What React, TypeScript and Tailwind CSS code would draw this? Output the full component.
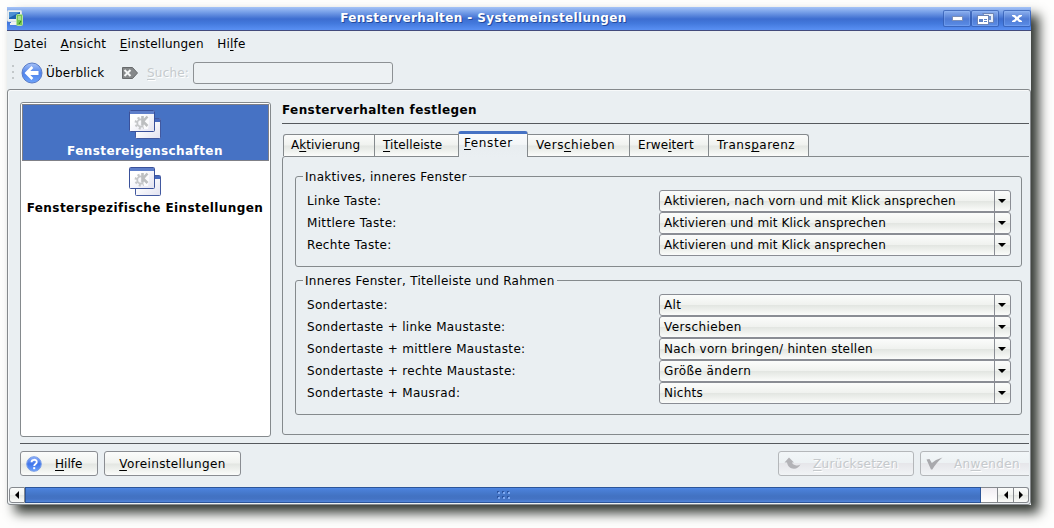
import type { ReactNode } from "react";

function Label({ text }: { text: string }) {
  const i = text.indexOf("&");
  if (i < 0) return <span>{text}</span>;
  return (
    <span>
      {text.slice(0, i)}
      <span className="underline decoration-1 underline-offset-2">{text[i + 1]}</span>
      {text.slice(i + 2)}
    </span>
  );
}

function AppIcon() {
  return (
    <svg width="18" height="18" viewBox="0 0 18 18">
      <path d="M4 11h7v2h1v2H3v-2h1z" fill="#eef1f3" />
      <rect x="0.5" y="0.5" width="14" height="11" rx="1" fill="#e8eef0" stroke="#d5dfe8" />
      <rect x="2" y="2" width="11" height="7" fill="#1d62b0" />
      <path d="M2 2h11L2 8z" fill="#4d91d4" />
      <rect x="9.5" y="4.5" width="6" height="11" rx="1" fill="#74c655" stroke="#b4e49a" />
      <path d="M11 7h3M11 9h3" stroke="#d9f5c8" />
      <path d="M12 14l2-3" stroke="#2c7d16" />
    </svg>
  );
}

function BackIcon() {
  return (
    <svg width="22" height="22" viewBox="0 0 22 22">
      <defs>
        <linearGradient id="back" x1="0" y1="0" x2="0" y2="1">
          <stop offset="0" stopColor="#a9c3f7" />
          <stop offset="0.5" stopColor="#4e82ea" />
          <stop offset="1" stopColor="#6ea4fb" />
        </linearGradient>
      </defs>
      <circle cx="11" cy="11" r="10" fill="url(#back)" stroke="#5a7cc8" />
      <path d="M10.5 4L3.500 11l7 7 1.800-2-3-3H17.500V9H9.300l3-3z" fill="#fff" />
    </svg>
  );
}

function ClearIcon() {
  return (
    <svg width="16" height="12" viewBox="0 0 16 12">
      <path d="M0.500 0.500h10L15.500 6l-5 5.500h-10z" fill="#85888a" stroke="#66696b" />
      <path d="M2.500 3l6 6M8.500 3L2.500 9" stroke="#f4f6f6" strokeWidth="2" />
    </svg>
  );
}

function WindowsIcon({ id }: { id: string }) {
  return (
    <svg width="32" height="30" viewBox="0 0 32 30">
      <defs>
        <linearGradient id={id} x1="0" y1="0" x2="1" y2="1">
          <stop offset="0.300" stopColor="#ffffff" />
          <stop offset="1" stopColor="#e2e2f0" />
        </linearGradient>
      </defs>
      <rect x="6.500" y="8.500" width="25" height="20" rx="1" fill={`url(#${id})`} stroke="#4259a0" />
      <rect x="7" y="9" width="24" height="3" fill="#4668bd" />
      <rect x="0.500" y="0.500" width="25" height="21" rx="1" fill={`url(#${id})`} stroke="#3a519a" />
      <rect x="1" y="1" width="24" height="3" fill="#5f7fca" />
      <circle cx="12" cy="13" r="5.200" fill="none" stroke="#c5c7c9" strokeWidth="2.500" strokeDasharray="2 2.084" />
      <circle cx="12" cy="13" r="3.700" fill="none" stroke="#c5c7c9" strokeWidth="1.800" />
      <path d="M12 6h8v7l-1 6h-4z" fill="#fbfbfd" />
      <path d="M13.500 6v9.500M18.500 6.500L14 11.500l4.500 4.500" fill="none" stroke="#bcbec0" strokeWidth="2.600" />
    </svg>
  );
}

function HelpIcon() {
  return (
    <svg width="16" height="16" viewBox="0 0 16 16">
      <defs>
        <linearGradient id="help" x1="0" y1="0" x2="0" y2="1">
          <stop offset="0" stopColor="#8fb2fb" />
          <stop offset="0.500" stopColor="#3f74ea" />
          <stop offset="1" stopColor="#6ca2ff" />
        </linearGradient>
      </defs>
      <circle cx="8" cy="8" r="7.300" fill="url(#help)" stroke="#7a9ee6" />
      <path d="M5.500 6.200C5.500 3 10.800 3 10.800 6c0 2-2.600 2-2.600 4" fill="none" stroke="#fff" strokeWidth="1.800" />
      <rect x="7.200" y="11.200" width="2" height="2" fill="#fff" />
    </svg>
  );
}

function UndoIcon() {
  return (
    <svg width="17" height="13" viewBox="0 0 17 13">
      <path d="M5 0.500L0.500 5.500H3c1 4 3 6.200 7 6.200 3 0 5-1.500 6.500-4.200-2 1-3.500 1.200-5 .7C9.500 7.600 8.500 7 8 5.500h2z" fill="#b3b3b7" />
    </svg>
  );
}

function CheckIcon() {
  return (
    <svg width="17" height="13" viewBox="0 0 17 13">
      <path d="M0.500 2.500L3.500 2l2.300 4L10 3l6.500-2.500C12 4 9 8 6.300 12.500H5z" fill="#a9a9ad" />
    </svg>
  );
}

function CaptionButton({ children }: { children: ReactNode }) {
  return (
    <div className="flex h-[17px] w-7 items-center justify-center rounded-[2px] border border-[#2b55ac]/70 bg-white/10 shadow-[inset_0_0_0_1px_rgba(150,190,255,0.300)]">
      {children}
    </div>
  );
}

const BUTTON_FACE =
  "bg-[linear-gradient(to_bottom,#fbfcfb_0%,#f0f2ef_48%,#e3e6e2_52%,#f3f5f2_85%,#fbfcfb_100%)]";

const DISABLED_FACE =
  "border-[#b4b7ba] bg-[linear-gradient(to_bottom,#f2f6f8_0%,#edf2f4_46%,#e6e6ea_50%,#f1f4f6_100%)] text-[#c5c9cc] [text-shadow:1px_1px_0_#fff]";

function Combo({ value, tracking }: { value: string; tracking: string }) {
  return (
    <div className={`flex h-[22px] w-[352px] rounded-[3px] border border-[#8a8d94] ${BUTTON_FACE}`}>
      <div className={`flex flex-1 items-center pb-px pl-1 ${tracking}`}>
        <Label text={value} />
      </div>
      <div className="flex w-4 items-center justify-center border-l border-[#8a8d94] pr-px">
        <svg width="8" height="4" viewBox="0 0 8 4">
          <path d="M0 0h8L4 4z" fill="#000" />
        </svg>
      </div>
    </div>
  );
}

type Row = { name: string; value: string; tracking?: string };

function Group({ title, rows, box }: { title: string; rows: Row[]; box: string }) {
  return (
    <fieldset className={`relative w-[727px] rounded-[3px] border border-[#858a8d] ${box}`}>
      <div className="absolute -top-2 left-[7px] flex h-4 items-center bg-[#eaeff2] px-[2px] tracking-[0.28px]">
        <Label text={title} />
      </div>
      <div className="flex flex-col pt-[13px] pl-[11px]">
        {rows.map((row) => (
          <div key={row.name} className="flex h-[22px] items-center">
            <div className="w-[352px] pb-px">
              <Label text={row.name} />
            </div>
            <Combo value={row.value} tracking={row.tracking ?? "tracking-[0.4px]"} />
          </div>
        ))}
      </div>
    </fieldset>
  );
}

const TABS = [
  { text: "A&ktivierung", size: "w-[92px] pl-[7px] tracking-[0.02px]" },
  { text: "&Titelleiste", size: "w-[83px] pl-2 tracking-[0.1px]" },
  { text: "&Fenster", size: "w-[70px] pl-[5px] tracking-[0.6px]" },
  { text: "Vers&chieben", size: "w-[102px] pl-2 tracking-[0.52px]" },
  { text: "Erwe&itert", size: "w-[79px] pl-2 tracking-[0.1px]" },
  { text: "Trans&parenz", size: "w-[100px] pl-2 tracking-[0.5px]" },
];

function Tabs() {
  return (
    <div className="flex h-[25px] items-end">
      {TABS.map((tab, i) =>
        i === 2 ? (
          <div
            key={tab.text}
            className={`relative z-10 -mb-px flex h-[26px] items-center rounded-t-[3px] border border-t-[3px] border-b-0 border-[#858a8d] border-t-[#4672c4] bg-[linear-gradient(to_bottom,#f9fbfc_0%,#f3f6f8_45%,#e8edf0_50%,#eaeff2_100%)] pb-[5px] ${tab.size}`}
          >
            <Label text={tab.text} />
          </div>
        ) : (
          <div
            key={tab.text}
            className={`flex h-[22px] items-center border-t border-r border-[#858a8d] pb-px ${BUTTON_FACE} ${tab.size} ${
              i === 0 ? "rounded-tl-[3px] border-l" : i === 5 ? "rounded-tr-[3px]" : i === 1 ? "border-r-0" : ""
            }`}
          >
            <Label text={tab.text} />
          </div>
        )
      )}
    </div>
  );
}

function ScrollArrow({ right, box }: { right?: boolean; box: string }) {
  return (
    <div className={`flex h-4 shrink-0 items-center justify-center border border-[#85898e] ${BUTTON_FACE} ${box}`}>
      <svg width="4" height="8" viewBox="0 0 4 8">
        <path d={right ? "M0 0v8l4-4z" : "M4 0v8L0 4z"} fill="#000" />
      </svg>
    </div>
  );
}

const GRIP = [0, 5, 10];

export default function App() {
  return (
    <div className="h-[528px] w-[1054px] overflow-hidden bg-[#fefefd] pt-[7px] pl-[7px] font-['DejaVu_Sans',sans-serif] text-[12px] leading-4 tracking-[0.33px] whitespace-nowrap text-black">
      <div className="flex h-[498px] w-[1024px] flex-col bg-[#eaeff2] shadow-[8px_8px_11px_0px_#343934]">
        <header className="flex h-6 shrink-0 items-center border-b border-[#424a7c] bg-[linear-gradient(to_bottom,#a5c3f6_0%,#7ba3ea_20%,#3d6dd0_52%,#4278dc_70%,#5990f3_100%)]">
          <div className="w-[18px] pt-px">
            <AppIcon />
          </div>
          <h1 className="flex-1 pb-[2px] text-center font-bold tracking-[0.38px] text-white [text-shadow:1px_1px_0_#234a9c]">
            <span className="pr-px">Fensterverhalten - Systemeinstellungen</span>
          </h1>
          <div className="flex">
            <CaptionButton>
              <svg width="11" height="5" viewBox="0 0 11 5">
                <rect x="0.500" y="0.500" width="10" height="4" fill="#fff" stroke="#7b8fb8" />
              </svg>
            </CaptionButton>
            <div className="mr-1">
              <CaptionButton>
                <svg width="17" height="12" viewBox="0 0 17 12">
                  <path d="M5.500 0.500h11v9h-5" fill="#6c8fce" stroke="#6d84b4" />
                  <path d="M7 2h8v6h-4" fill="none" stroke="#e6edf8" strokeWidth="2" />
                  <rect x="0.500" y="2.500" width="11" height="9" fill="#fff" stroke="#6d84b4" />
                  <path d="M2 6h4v3H2z" fill="#5d82c6" />
                  <path d="M7 6h3v1H7zM7 8h3v1H7z" fill="#5d82c6" />
                </svg>
              </CaptionButton>
            </div>
            <CaptionButton>
              <svg width="10" height="7" viewBox="0 0 10 7">
                <path d="M0 0h3l2 2 2-2h3v1L7 3v1l3 2v1H7L5 5 3 7H0V6l3-2V3L0 1z" fill="#fff" />
              </svg>
            </CaptionButton>
          </div>
        </header>

        <nav className="flex h-[26px] shrink-0 items-center gap-[13.500px] pl-[7px] tracking-[0.2px]">
          <Label text="&Datei" />
          <Label text="&Ansicht" />
          <Label text="&Einstellungen" />
          <Label text="Hi&lfe" />
        </nav>

        <div className="flex h-8 shrink-0 items-center pl-[5px]">
          <div className="mr-[7px] h-4 w-[2px] bg-[repeating-linear-gradient(to_bottom,#c3c8ca_0_2px,transparent_2px_6px)]" />
          <BackIcon />
          <span className="ml-[3px] w-[76px] tracking-[0.2px]">Überblick</span>
          <ClearIcon />
          <span className="ml-[9px] w-[46px] tracking-[0.2px] text-[#c5cacd] [text-shadow:1px_1px_0_#fff]">
            <Label text="&Suche:" />
          </span>
          <input
            aria-label="Suche"
            disabled
            className="h-[22px] w-[200px] rounded-[3px] border border-[#8d9194] bg-[#edf1f3]"
          />
        </div>

        <main className="flex min-h-0 flex-1 flex-col rounded-[3px] border border-[#85898c] shadow-[inset_1px_1px_0_#f7f9fa]">
          <div className="flex h-[353px] pt-3 pl-3">
            <aside className="h-[335px] w-[251px] shrink-0 rounded-[3px] border border-[#858a8d] bg-white p-px text-center font-bold tracking-[0.42px]">
              <div className="flex h-[57px] flex-col items-center border border-[#7f8087] bg-[#4672c4] pt-[5px] pr-px text-white">
                <WindowsIcon id="w1" />
                <span className="mt-[3px]">Fenstereigenschaften</span>
              </div>
              <div className="flex flex-col items-center pt-[6px] pr-px">
                <WindowsIcon id="w2" />
                <span className="mt-[3px]">Fensterspezifische Einstellungen</span>
              </div>
            </aside>

            <section className="ml-[11px] flex w-[747px] flex-col overflow-hidden">
              <h2 className="h-[22px] border-b border-[#55595d] pb-[5px] font-bold tracking-[0.41px]">
                Fensterverhalten festlegen
              </h2>
              <div className="relative z-10 mt-[7px] pl-px">
                <Tabs />
              </div>
              <div className="flex h-[279px] w-[752px] flex-col rounded-[3px] border border-[#858a8d] pt-[19px] pl-3">
                <Group
                  title="Inaktives, inneres Fenster"
                  box="h-[91px] mb-[13px]"
                  rows={[
                    {
                      name: "Linke Taste:",
                      value: "Aktivieren, nach vorn und mit Klick ansprechen",
                      tracking: "tracking-[0.17px]",
                    },
                    {
                      name: "Mittlere Taste:",
                      value: "Aktivieren und mit Klick ansprechen",
                      tracking: "tracking-[0.15px]",
                    },
                    {
                      name: "Rechte Taste:",
                      value: "Aktivieren und mit Klick ansprechen",
                      tracking: "tracking-[0.15px]",
                    },
                  ]}
                />
                <Group
                  title="Inneres Fenster, Titelleiste und Rahmen"
                  box="h-[135px]"
                  rows={[
                    { name: "Sondertaste:", value: "Alt" },
                    { name: "Sondertaste + linke Maustaste:", value: "Verschieben" },
                    {
                      name: "Sondertaste + mittlere Maustaste:",
                      value: "Nach vorn bringen/ hinten stellen",
                      tracking: "tracking-[0.24px]",
                    },
                    { name: "Sondertaste + rechte Maustaste:", value: "Größe ändern" },
                    { name: "Sondertaste + Mausrad:", value: "Nichts", tracking: "tracking-[0.24px]" },
                  ]}
                />
              </div>
            </section>
          </div>

          <div className="mr-px ml-3 h-px shrink-0 bg-[#55595d]" />

          <footer className="mr-px flex h-[43px] shrink-0 overflow-hidden pt-[7px] pl-3">
            <button
              className={`flex h-[25px] w-[78px] shrink-0 items-center rounded-[3px] border border-[#8a8d92] pl-[5px] ${BUTTON_FACE}`}
            >
              <HelpIcon />
              <span className="ml-[13px] tracking-[0.02px]">
                <Label text="&Hilfe" />
              </span>
            </button>
            <button
              className={`ml-[6px] h-[25px] w-[137px] shrink-0 rounded-[3px] border border-[#8a8d92] tracking-[0.38px] ${BUTTON_FACE}`}
            >
              <Label text="&Voreinstellungen" />
            </button>
            <button
              disabled
              className={`ml-[537px] flex h-[25px] w-[136px] shrink-0 items-center rounded-[3px] border pl-[5px] ${DISABLED_FACE}`}
            >
              <UndoIcon />
              <span className="ml-3">
                <Label text="&Zurücksetzen" />
              </span>
            </button>
            <button
              disabled
              className={`ml-[6px] flex h-[25px] w-[120px] shrink-0 items-center rounded-[3px] border pl-[5px] ${DISABLED_FACE}`}
            >
              <CheckIcon />
              <span className="ml-[11px]">
                <Label text="An&wenden" />
              </span>
            </button>
          </footer>

          <div className="mr-px ml-px flex h-4 shrink-0">
            <ScrollArrow box="w-4 rounded-l-[3px]" />
            <div className="flex w-[956px] shrink-0 items-center justify-center border border-[#2c5599] bg-[linear-gradient(to_bottom,#4d86e6_0,#4a7fd6_2px,#4272c2_8px,#4473c4_11px,#5185da_100%)]">
              <svg width="13" height="8" viewBox="0 0 13 8">
                {GRIP.map((x) => (
                  <g key={x}>
                    <path d={`M${x} 0h2v2h-2zM${x} 5h2v2h-2z`} fill="#2b54a0" />
                    <path d={`M${x + 1} 1h2v2h-2zM${x + 1} 6h2v2h-2z`} fill="#7ea8f0" />
                  </g>
                ))}
              </svg>
            </div>
            <div className="flex-1 border-y border-[#85898e] bg-[linear-gradient(to_bottom,#f0edf2,#ffffff)]" />
            <ScrollArrow box="w-[17px]" />
            <ScrollArrow right box="w-[15px] rounded-r-[3px] border-l-0" />
          </div>
        </main>
      </div>
    </div>
  );
}
